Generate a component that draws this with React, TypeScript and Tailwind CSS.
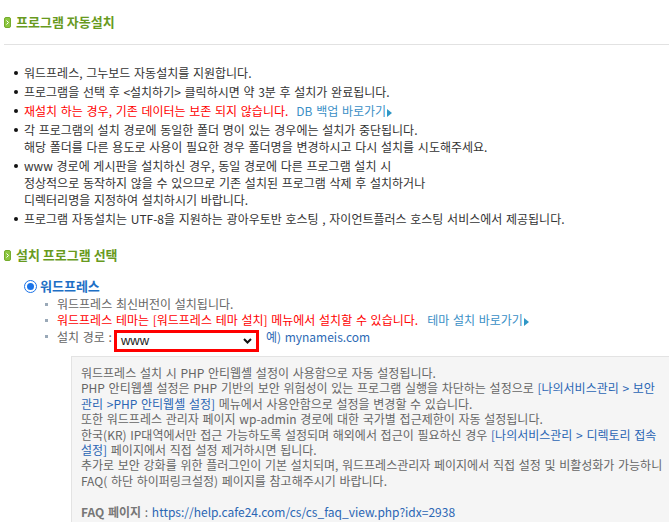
import React from 'react';

const FONT = "font-['Noto_Sans_CJK_KR','Liberation_Sans',sans-serif]";

const Arrow = () => (
  <svg width="5" height="8" viewBox="0 0 5 8" className="inline-block ml-[1px] align-[-1px]">
    <path d="M0 0 L5 4 L0 8 Z" fill="#2f97c6" />
  </svg>
);

const TitleIcon = () => (
  <span className="inline-flex items-center justify-center w-[7px] h-[11px] rounded-[2px] bg-[#8cc63f] border border-[#74ac2c] mr-[5px]">
    <svg width="3" height="5" viewBox="0 0 3 5">
      <path d="M0.5 0.5 L2.5 2.5 L0.5 4.5" stroke="#ffffff" strokeWidth="1" fill="none" />
    </svg>
  </span>
);

const Section: React.FC<{ title: string }> = ({ title }) => (
  <div className="flex items-center h-[16px]">
    <TitleIcon />
    <span className="text-[13px] font-bold text-[#689a1e] leading-[16px] [word-spacing:0px]">{title}</span>
  </div>
);

const Dot = () => <span className="mt-[7px] ml-[10px] mr-[6px] w-[4px] h-[4px] rounded-full bg-[#111] shrink-0" />;
const Square = () => <span className="mt-[7px] ml-[41px] mr-[9px] w-[3px] h-[3px] bg-[#9aa9b8] shrink-0" />;

const topItems: React.ReactNode[] = [
  <>워드프레스, 그누보드 자동설치를 지원합니다.</>,
  <>프로그램을 선택 후 &lt;설치하기&gt; 클릭하시면 약 3분 후 설치가 완료됩니다.</>,
  <>
    <span className="text-[#ff0000]">재설치 하는 경우, 기존 데이터는 보존 되지 않습니다.</span>
    <span className="ml-[8px] text-[#3a8fc6]">DB 백업 바로가기<Arrow /></span>
  </>,
  <>
    각 프로그램의 설치 경로에 동일한 폴더 명이 있는 경우에는 설치가 중단됩니다.<br />
    해당 폴더를 다른 용도로 사용이 필요한 경우 폴더명을 변경하시고 다시 설치를 시도해주세요.
  </>,
  <>
    www 경로에 게시판을 설치하신 경우, 동일 경로에 다른 프로그램 설치 시<br />
    정상적으로 동작하지 않을 수 있으므로 기존 설치된 프로그램 삭제 후 설치하거나<br />
    디렉터리명을 지정하여 설치하시기 바랍니다.
  </>,
  <>프로그램 자동설치는 UTF-8을 지원하는 광아우토반 호스팅 , 자이언트플러스 호스팅 서비스에서 제공됩니다.</>,
];

export default function App() {
  return (
    <div className={`w-[669px] h-[522px] overflow-hidden bg-white pl-[4px] text-[12px] [word-spacing:1px] ${FONT}`}>
      <div className="h-[45px] flex items-center border-b border-[#e2e2e2]">
        <Section title="프로그램 자동설치" />
      </div>

      <ul className="pt-[19px] text-[#333]">
        {topItems.map((item, i) => (
          <li key={i} className="flex mb-[2px] leading-[17px] whitespace-nowrap">
            <Dot />
            <div>{item}</div>
          </li>
        ))}
      </ul>

      <div className="mt-[20px]">
        <Section title="설치 프로그램 선택" />
      </div>

      <div className="mt-[15px] flex items-center h-[16px] pl-[20px]">
        <span className="w-[13px] h-[13px] rounded-full border-[1.5px] border-[#1a73e8] flex items-center justify-center mr-[3px]">
          <span className="w-[7px] h-[7px] rounded-full bg-[#1a73e8]" />
        </span>
        <span className="text-[13px] font-bold text-[#1e6fc5]">워드프레스</span>
      </div>

      <ul className="mt-[2px] text-[#666] leading-[16px] whitespace-nowrap">
        <li className="flex">
          <Square />
          <span>워드프레스 최신버전이 설치됩니다.</span>
        </li>
        <li className="flex">
          <Square />
          <span className="text-[#ff0000]">워드프레스 테마는 [워드프레스 테마 설치] 메뉴에서 설치할 수 있습니다.</span>
          <span className="ml-[9px] text-[#3a8fc6]">테마 설치 바로가기<Arrow /></span>
        </li>
        <li className="flex items-start">
          <Square />
          <span className="mt-[1px]">설치 경로 :</span>
          <div className="ml-[2px] mt-[2px] w-[145px] h-[22px] border-[3px] border-[#ff0000] bg-white flex items-center justify-between pl-[4px] pr-[4px]">
            <span className="text-[13px] text-[#222] font-['Liberation_Sans',sans-serif]">www</span>
            <svg width="9" height="6" viewBox="0 0 9 6">
              <path d="M1 1 L4.5 4.5 L8 1" stroke="#111" strokeWidth="2" fill="none" />
            </svg>
          </div>
          <span className="ml-[7px] mt-[1px] text-[#2d6ab5]">예) mynameis.com</span>
        </li>
      </ul>

      <div className="mt-[4px] ml-[67px] bg-[#f5f5f5] border-t border-l border-[#e3e3e3] pl-[9px] pt-[8px] pb-[20px] text-[#666] leading-[15.4px] whitespace-nowrap">
        워드프레스 설치 시 PHP 안티웹셸 설정이 사용함으로 자동 설정됩니다.<br />
        PHP 안티웹셸 설정은 PHP 기반의 보안 위험성이 있는 프로그램 실행을 차단하는 설정으로 <span className="text-[#2b66b4]">[나의서비스관리 &gt; 보안</span><br />
        <span className="text-[#2b66b4]">관리 &gt;PHP 안티웹셸 설정]</span> 메뉴에서 사용안함으로 설정을 변경할 수 있습니다.<br />
        또한 워드프레스 관리자 페이지 wp-admin 경로에 대한 국가별 접근제한이 자동 설정됩니다.<br />
        한국(KR) IP대역에서만 접근 가능하도록 설정되며 해외에서 접근이 필요하신 경우 <span className="text-[#2b66b4]">[나의서비스관리 &gt; 디렉토리 접속</span><br />
        <span className="text-[#2b66b4]">설정]</span> 페이지에서 직접 설정 제거하시면 됩니다.<br />
        추가로 보안 강화를 위한 플러그인이 기본 설치되며, 워드프레스관리자 페이지에서 직접 설정 및 비활성화가 가능하니<br />
        FAQ( 하단 하이퍼링크설정) 페이지를 참고해주시기 바랍니다.<br />
        <br />
        <span className="font-bold text-[#777]">FAQ 페이지</span> : <span className="text-[#2b66b4]">https://help.cafe24.com/cs/cs_faq_view.php?idx=2938</span>
      </div>
    </div>
  );
}
